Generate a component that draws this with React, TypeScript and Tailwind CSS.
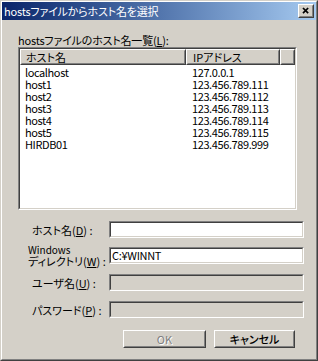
import React from 'react'

const hosts = [
  { name: 'localhost', ip: '127.0.0.1' },
  { name: 'host1', ip: '123.456.789.111' },
  { name: 'host2', ip: '123.456.789.112' },
  { name: 'host3', ip: '123.456.789.113' },
  { name: 'host4', ip: '123.456.789.114' },
  { name: 'host5', ip: '123.456.789.115' },
  { name: 'HIRDB01', ip: '123.456.789.999' },
]

const font = "font-['Noto_Sans_CJK_JP','Liberation_Sans',sans-serif] [font-feature-settings:'palt']"

// 凹んだ枠 (sunken)
const Sunken = ({ className = '', children }: { className?: string; children?: React.ReactNode }) => (
  <div className={`border border-t-[#808080] border-l-[#808080] border-r-white border-b-white ${className}`}>
    <div className="h-full border border-t-[#404040] border-l-[#404040] border-r-[#d4d0c8] border-b-[#d4d0c8]">
      {children}
    </div>
  </div>
)

// 浮き出た枠 (raised)
const Raised = ({ className = '', children }: { className?: string; children?: React.ReactNode }) => (
  <div className={`border border-t-white border-l-white border-r-[#404040] border-b-[#404040] ${className}`}>
    <div className="h-full flex items-center border border-t-transparent border-l-transparent border-r-[#808080] border-b-[#808080]">
      {children}
    </div>
  </div>
)

const Field = ({ label, value, disabled, className = '' }: { label: React.ReactNode; value?: string; disabled?: boolean; className?: string }) => (
  <div className={`flex items-center h-[17px] ${className}`}>
    <div className="w-[107px] pl-[30px] text-[11px] leading-[12px] text-black">{label}</div>
    <Sunken className={`w-[195px] h-[17px] ${disabled ? 'bg-[#d4d0c8]' : 'bg-white'}`}>
      <div className="pl-[1px] text-[11px] leading-[13px] tracking-[-0.3px] text-black">{value}</div>
    </Sunken>
  </div>
)

export default function App() {
  return (
    <div className={`w-[318px] h-[361px] bg-[#d4d0c8] border border-t-[#d4d0c8] border-l-[#d4d0c8] border-r-[#404040] border-b-[#404040] ${font}`}>
      <div className="h-full flex flex-col border border-t-white border-l-white border-r-[#808080] border-b-[#808080]">
        {/* タイトルバー */}
        <div className="h-[18px] flex items-center justify-between bg-gradient-to-r from-[#0a246a] to-[#a6caf0] pl-[2px] pr-[2px]">
          <span className="text-white text-[11px] leading-[12px] tracking-[-0.2px]">hostsファイルからホスト名を選択</span>
          <Raised className="w-[16px] h-[14px] bg-[#d4d0c8]">
            <svg width="14" height="12" viewBox="0 0 14 12" className="block">
              <path d="M3.5 2.5 L9.5 8.5 M9.5 2.5 L3.5 8.5" stroke="black" strokeWidth="2" />
            </svg>
          </Raised>
        </div>

        {/* 一覧ラベル */}
        <div className="mt-[13px] h-[14px] pl-[16px] text-[11px] leading-[14px] text-black tracking-[-0.2px]">
          hostsファイルのホスト名一覧(<u>L</u>):
        </div>

        {/* 一覧 */}
        <Sunken className="ml-[16px] w-[279px] h-[163px] bg-white">
          <div className="flex h-[16px] bg-[#d4d0c8]">
            <Raised className="w-[166px] h-[16px]">
              <span className="pl-[4px] text-[11px] leading-[12px]">ホスト名</span>
            </Raised>
            <Raised className="w-[94px] h-[16px]">
              <span className="pl-[5px] text-[11px] leading-[12px]">IPアドレス</span>
            </Raised>
            <Raised className="flex-1 h-[16px]" />
          </div>
          <div className="pt-[1px]">
            {hosts.map((h) => (
              <div key={h.name} className="flex h-[12px] text-[11px] leading-[12px] text-black tracking-[-0.4px]">
                <div className="w-[166px] pl-[5px]">{h.name}</div>
                <div className="pl-[6px]">{h.ip}</div>
              </div>
            ))}
          </div>
        </Sunken>

        {/* 入力欄 */}
        <Field className="mt-[11px]" label={<>ホスト名(<u>D</u>) :</>} />
        <Field
          className="mt-[9px]"
          value="C:¥WINNT"
          label={
            <div className="-ml-[4px]">
              <div className="text-[10px] leading-[10px]">Windows</div>
              <div className="leading-[12px]">ディレクトリ(<u>W</u>) :</div>
            </div>
          }
        />
        <Field className="mt-[10px]" disabled label={<>ユーザ名(<u>U</u>) :</>} />
        <Field className="mt-[10px]" disabled label={<>パスワード(<u>P</u>) :</>} />

        {/* ボタン */}
        <div className="mt-[12px] flex gap-[8px] pl-[121px]">
          <Raised className="w-[83px] h-[18px]">
            <span className="w-full text-center text-[11px] leading-[12px] text-[#808080] [text-shadow:1px_1px_0_#fff]">OK</span>
          </Raised>
          <Raised className="w-[81px] h-[18px]">
            <span className="w-full text-center text-[11px] leading-[12px] text-black font-medium">キャンセル</span>
          </Raised>
        </div>
      </div>
    </div>
  )
}
